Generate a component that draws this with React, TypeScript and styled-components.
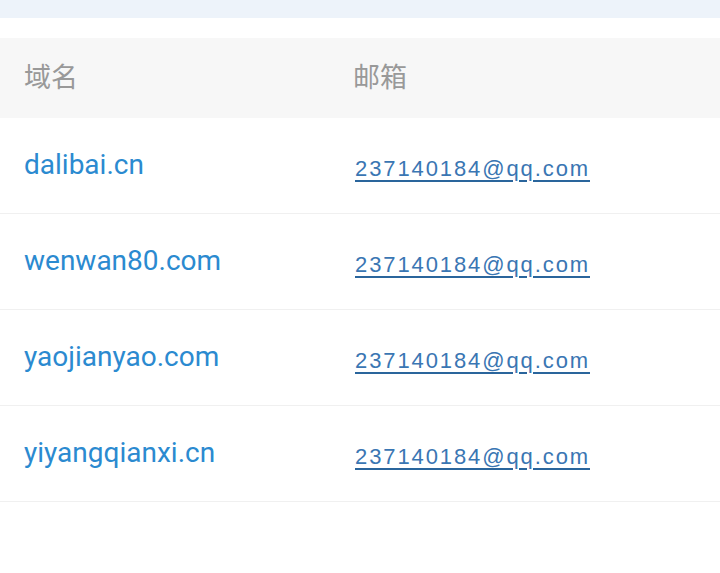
import React from "react";
import styled, { createGlobalStyle } from "styled-components";

const Global = createGlobalStyle`
  html, body { margin: 0; padding: 0; background: #ffffff; }
  body { font-family: Roboto, "Noto Sans CJK SC", sans-serif; }
`;

const Page = styled.div`
  width: 720px;
  display: flex;
  flex-direction: column;
`;

const TopBand = styled.div`
  height: 18px;
  background: #edf3fa;
`;

const Spacer = styled.div`
  height: 20px;
  background: #ffffff;
`;

const Table = styled.div`
  display: flex;
  flex-direction: column;
`;

const HeaderRow = styled.div`
  display: grid;
  grid-template-columns: 329px 1fr;
  height: 80px;
  align-items: center;
  background: #f7f7f7;
  padding-left: 24px;
`;

const HeaderCell = styled.div`
  font-family: "Noto Sans CJK SC", sans-serif;
  font-size: 27px;
  color: #999999;
  line-height: 1;
  margin-top: -6px;
`;

const Row = styled.div`
  display: grid;
  grid-template-columns: 331px 1fr;
  height: 95px;
  align-items: center;
  padding-left: 24px;
  border-bottom: 1px solid #f0f0f0;
`;

const Domain = styled.a`
  font-family: Roboto, sans-serif;
  font-size: 28px;
  color: #2b8ad0;
  text-decoration: none;
  line-height: 1;
  margin-top: -2px;
`;

const Email = styled.a`
  font-family: "Liberation Sans", Arial, sans-serif;
  font-size: 22px;
  letter-spacing: 1.9px;
  color: #3a76b3;
  text-decoration: underline;
  text-decoration-color: #2a659c;
  text-decoration-thickness: 2px;
  text-underline-offset: 4px;
  line-height: 1;
  margin-top: 7px;
  justify-self: start;
`;

const rows = [
  "dalibai.cn",
  "wenwan80.com",
  "yaojianyao.com",
  "yiyangqianxi.cn",
];

export default function App() {
  return (
    <Page>
      <Global />
      <TopBand />
      <Spacer />
      <Table>
        <HeaderRow>
          <HeaderCell>域名</HeaderCell>
          <HeaderCell>邮箱</HeaderCell>
        </HeaderRow>
        {rows.map((d) => (
          <Row key={d}>
            <Domain>{d}</Domain>
            <Email>237140184@qq.com</Email>
          </Row>
        ))}
      </Table>
    </Page>
  );
}
